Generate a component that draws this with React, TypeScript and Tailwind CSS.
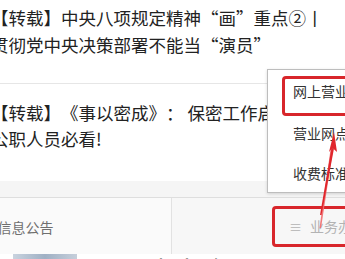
export default function App() {
  const font = { fontFamily: '"Noto Sans CJK SC", "Noto Sans", sans-serif' };
  return (
    <div
      lang="zh-CN"
      className="relative w-[345px] h-[259px] overflow-hidden bg-white"
      style={font}
    >
      {/* article list */}
      <div className="-ml-[9px] w-[340px] [text-spacing-trim:space-all]">
        <div className="pt-[4px] pb-[25px] border-b border-[#e6e6e6]">
          <p className="text-[17.5px] leading-[27px] text-[#222]">
            【转载】中央八项规定精神“画”重点②丨贯彻党中央决策部署不能当“演员”
          </p>
        </div>
        <div className="pt-[16px] pb-[29px]">
          <p className="text-[17.5px] leading-[26px] text-[#222]">
            【转载】《事以密成》： 保密工作启示录，公职人员必看!
          </p>
        </div>
      </div>

      <div className="h-[16px] bg-[#f5f5f5]" />

      {/* bottom menu bar */}
      <div className="flex h-[57px] border-t border-[#dedede] bg-[#fafafa]">
        <div className="w-[172px] flex items-center justify-center pr-[120px] pt-[3px] text-[14px] text-[#6f6f6f] whitespace-nowrap border-r border-[#e2e2e2]">
          信息公告
        </div>
        <div className="flex-1 flex items-center pl-[117px] pt-[1px] text-[14px] text-[#b3b3b3] whitespace-nowrap bg-[#f7f7f7]">
          <span className="mr-[8px] text-[13px]">≡</span>
          业务办理
        </div>
      </div>

      {/* content below */}
      <div className="flex gap-[45px] pl-[13px]">
        <div className="w-[64px] h-[20px] bg-gradient-to-r from-[#c9d3df] via-[#9fb0c4] to-[#c6cfdb]" />
        <div className="mt-[1px] text-[26px] leading-[30px] text-[#333] whitespace-nowrap">开喜出途</div>
      </div>

      {/* submenu popup */}
      <div className="absolute left-[267px] top-[69px] w-[110px] h-[124px] bg-white border border-[#bdbdbd] shadow-[0_1px_3px_rgba(0,0,0,0.15)] text-[14px] text-[#333]">
        <div className="h-[43px] flex items-center pl-[25px] whitespace-nowrap">网上营业厅</div>
        <div className="h-[40px] flex items-center pl-[25px] whitespace-nowrap">营业网点</div>
        <div className="h-[40px] flex items-center pl-[25px] whitespace-nowrap">收费标准</div>
      </div>

      {/* red annotations */}
      <div className="absolute left-[282px] top-[76px] w-[80px] h-[40px] border-[3px] border-[#d8262b] rounded-[4px]" />
      <div className="absolute left-[272px] top-[206px] w-[90px] h-[41px] border-[3px] border-[#d8262b] rounded-[4px]" />
      <svg className="absolute left-0 top-0" width="345" height="259" viewBox="0 0 345 259">
        <path d="M319.5 228 L331 146 L333.5 146.5 L321 228 Z" fill="#f06a6d" opacity="0.9" />
        <path d="M334 132 L329 152 L332.5 148 L337 152 Z" fill="#e0262c" />
        <path d="M320 215 L331.5 148 L334 148.5 L321.5 215 Z" fill="#e0262c" />
      </svg>
    </div>
  );
}
